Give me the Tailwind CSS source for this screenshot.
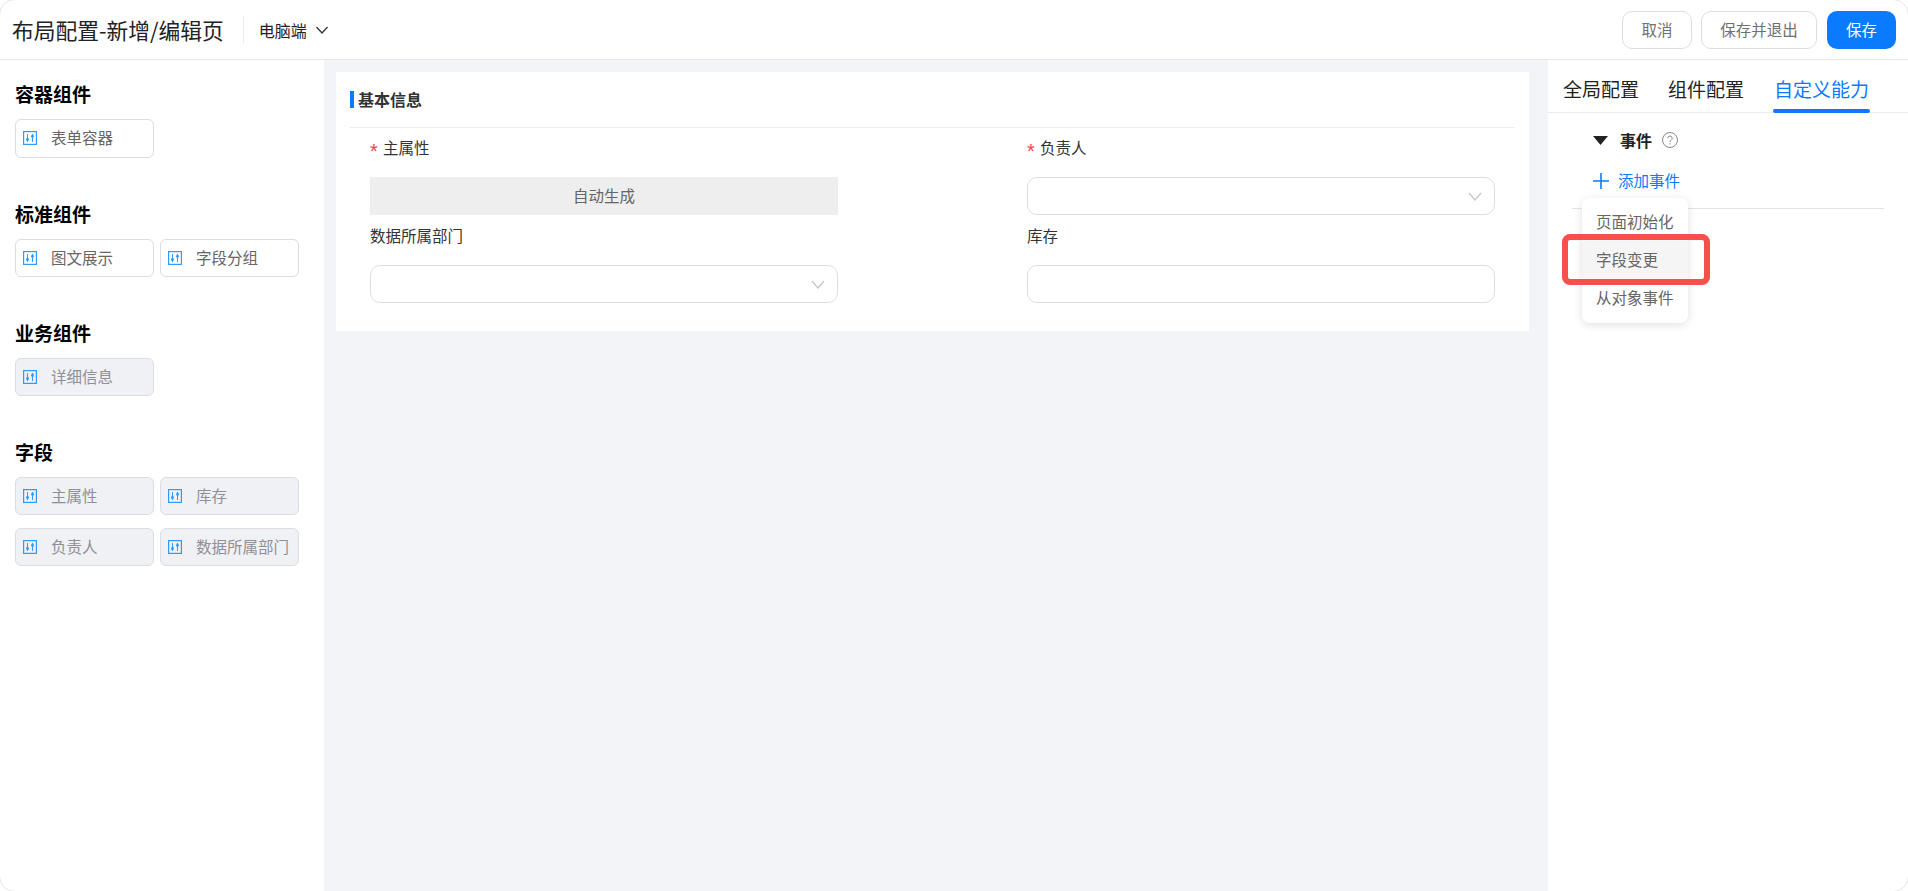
<!DOCTYPE html>
<html lang="zh-CN">
<head>
  <meta charset="UTF-8" />
  <title>布局配置-新增/编辑页</title>
  <script src="https://cdn.jsdelivr.net/npm/@tailwindcss/browser@4"></script>
</head>
<body class="bg-white h-[891px] overflow-hidden font-['Noto_Sans_CJK_SC','Noto_Sans',sans-serif]">
  <div class="h-[893px] w-[1910px] -m-px border border-[#e6e6e8] rounded-[16px] overflow-hidden flex flex-col bg-white">
    <!-- Header -->
    <header class="h-[60px] shrink-0 border-b border-[#e8e8ea] flex items-center pl-3 pr-3">
      <h1 class="text-[21.75px] leading-7 text-[#222]">布局配置-新增/编辑页</h1>
      <div class="w-px h-7 bg-[#ececee] ml-[19px] mr-[15px]"></div>
      <button class="flex items-center gap-2 text-base text-[#222]">
        电脑端
        <svg class="w-3.5 h-3.5" viewBox="0 0 14 14" fill="none" stroke="#333" stroke-width="1.3"><path d="M1.5 4l5.5 6 5.5-6" /></svg>
      </button>
      <div class="ml-auto flex items-center">
        <button class="w-[70px] h-[38px] rounded-[10px] border border-[#dcdde1] text-[15.5px] text-[#707070]">取消</button>
        <button class="w-[116px] h-[38px] ml-[9px] rounded-[10px] border border-[#dcdde1] text-[15.5px] text-[#707070]">保存并退出</button>
        <button class="w-[69px] h-[38px] ml-[10px] rounded-[10px] bg-[#0a7aff] text-[15.5px] text-white">保存</button>
      </div>
    </header>

    <div class="flex-1 flex min-h-0">
      <!-- Component palette -->
      <aside class="w-[324px] shrink-0 pl-[15px] pt-[23px]">
        <h2 class="text-[19px] leading-[22px] font-bold text-black">容器组件</h2>
        <div class="grid grid-cols-[139px_139px] gap-x-1.5 gap-y-[13px] mt-[14px]">
          <div class="h-[39px] rounded-md border border-[#dcdde3] flex items-center pl-[7px] pb-px text-[15.5px] text-[#666]">
            <svg class="w-3.5 h-3.5 mr-3.5 shrink-0" viewBox="0 0 14 14" fill="none" stroke="#2f9bff"><rect x=".6" y=".6" width="12.8" height="12.8" stroke-width="1.2" /><path d="M4.5 3v8M9.5 3v8" /><ellipse cx="4.5" cy="8.5" rx="1.4" ry="1.8" fill="#2f9bff" stroke="none" /><ellipse cx="9.5" cy="5.2" rx="1.4" ry="1.8" fill="#2f9bff" stroke="none" /></svg>
            表单容器
          </div>
        </div>
        <h2 class="text-[19px] leading-[22px] font-bold text-black mt-[45px]">标准组件</h2>
        <div class="grid grid-cols-[139px_139px] gap-x-1.5 gap-y-[13px] mt-[14px]">
          <div class="h-[38px] rounded-md border border-[#dcdde3] flex items-center pl-[7px] text-[15.5px] text-[#666]">
            <svg class="w-3.5 h-3.5 mr-3.5 shrink-0" viewBox="0 0 14 14" fill="none" stroke="#2f9bff"><rect x=".6" y=".6" width="12.8" height="12.8" stroke-width="1.2" /><path d="M4.5 3v8M9.5 3v8" /><ellipse cx="4.5" cy="8.5" rx="1.4" ry="1.8" fill="#2f9bff" stroke="none" /><ellipse cx="9.5" cy="5.2" rx="1.4" ry="1.8" fill="#2f9bff" stroke="none" /></svg>
            图文展示
          </div>
          <div class="h-[38px] rounded-md border border-[#dcdde3] flex items-center pl-[7px] text-[15.5px] text-[#666]">
            <svg class="w-3.5 h-3.5 mr-3.5 shrink-0" viewBox="0 0 14 14" fill="none" stroke="#2f9bff"><rect x=".6" y=".6" width="12.8" height="12.8" stroke-width="1.2" /><path d="M4.5 3v8M9.5 3v8" /><ellipse cx="4.5" cy="8.5" rx="1.4" ry="1.8" fill="#2f9bff" stroke="none" /><ellipse cx="9.5" cy="5.2" rx="1.4" ry="1.8" fill="#2f9bff" stroke="none" /></svg>
            字段分组
          </div>
        </div>
        <h2 class="text-[19px] leading-[22px] font-bold text-black mt-[45px]">业务组件</h2>
        <div class="grid grid-cols-[139px_139px] gap-x-1.5 gap-y-[13px] mt-[14px]">
          <div class="h-[38px] rounded-md border border-[#dcdde3] bg-[#f0f1f5] flex items-center pl-[7px] text-[15.5px] text-[#8f8f95]">
            <svg class="w-3.5 h-3.5 mr-3.5 shrink-0" viewBox="0 0 14 14" fill="none" stroke="#2f9bff"><rect x=".6" y=".6" width="12.8" height="12.8" stroke-width="1.2" /><path d="M4.5 3v8M9.5 3v8" /><ellipse cx="4.5" cy="8.5" rx="1.4" ry="1.8" fill="#2f9bff" stroke="none" /><ellipse cx="9.5" cy="5.2" rx="1.4" ry="1.8" fill="#2f9bff" stroke="none" /></svg>
            详细信息
          </div>
        </div>
        <h2 class="text-[19px] leading-[22px] font-bold text-black mt-[45px]">字段</h2>
        <div class="grid grid-cols-[139px_139px] gap-x-1.5 gap-y-[13px] mt-[14px]">
          <div class="h-[38px] rounded-md border border-[#dcdde3] bg-[#f0f1f5] flex items-center pl-[7px] text-[15.5px] text-[#8f8f95]">
            <svg class="w-3.5 h-3.5 mr-3.5 shrink-0" viewBox="0 0 14 14" fill="none" stroke="#2f9bff"><rect x=".6" y=".6" width="12.8" height="12.8" stroke-width="1.2" /><path d="M4.5 3v8M9.5 3v8" /><ellipse cx="4.5" cy="8.5" rx="1.4" ry="1.8" fill="#2f9bff" stroke="none" /><ellipse cx="9.5" cy="5.2" rx="1.4" ry="1.8" fill="#2f9bff" stroke="none" /></svg>
            主属性
          </div>
          <div class="h-[38px] rounded-md border border-[#dcdde3] bg-[#f0f1f5] flex items-center pl-[7px] text-[15.5px] text-[#8f8f95]">
            <svg class="w-3.5 h-3.5 mr-3.5 shrink-0" viewBox="0 0 14 14" fill="none" stroke="#2f9bff"><rect x=".6" y=".6" width="12.8" height="12.8" stroke-width="1.2" /><path d="M4.5 3v8M9.5 3v8" /><ellipse cx="4.5" cy="8.5" rx="1.4" ry="1.8" fill="#2f9bff" stroke="none" /><ellipse cx="9.5" cy="5.2" rx="1.4" ry="1.8" fill="#2f9bff" stroke="none" /></svg>
            库存
          </div>
          <div class="h-[38px] rounded-md border border-[#dcdde3] bg-[#f0f1f5] flex items-center pl-[7px] text-[15.5px] text-[#8f8f95]">
            <svg class="w-3.5 h-3.5 mr-3.5 shrink-0" viewBox="0 0 14 14" fill="none" stroke="#2f9bff"><rect x=".6" y=".6" width="12.8" height="12.8" stroke-width="1.2" /><path d="M4.5 3v8M9.5 3v8" /><ellipse cx="4.5" cy="8.5" rx="1.4" ry="1.8" fill="#2f9bff" stroke="none" /><ellipse cx="9.5" cy="5.2" rx="1.4" ry="1.8" fill="#2f9bff" stroke="none" /></svg>
            负责人
          </div>
          <div class="h-[38px] rounded-md border border-[#dcdde3] bg-[#f0f1f5] flex items-center pl-[7px] text-[15.5px] text-[#8f8f95]">
            <svg class="w-3.5 h-3.5 mr-3.5 shrink-0" viewBox="0 0 14 14" fill="none" stroke="#2f9bff"><rect x=".6" y=".6" width="12.8" height="12.8" stroke-width="1.2" /><path d="M4.5 3v8M9.5 3v8" /><ellipse cx="4.5" cy="8.5" rx="1.4" ry="1.8" fill="#2f9bff" stroke="none" /><ellipse cx="9.5" cy="5.2" rx="1.4" ry="1.8" fill="#2f9bff" stroke="none" /></svg>
            数据所属部门
          </div>
        </div>
      </aside>

      <!-- Canvas -->
      <main class="w-[1224px] shrink-0 bg-[#f3f4f8] pl-3 pt-3">
        <section class="w-[1193px] h-[259px] bg-white px-3.5 pt-[19px]">
          <div class="flex items-center h-[17px]">
            <span class="w-1 h-[17px] bg-[#0a7aff]"></span>
            <h3 class="ml-1 mb-0.5 text-base font-bold text-[#333]">基本信息</h3>
          </div>
          <div class="h-px bg-[#eeeef0] mt-[19px]"></div>
          <div class="grid grid-cols-[468px_468px] gap-x-[189px] ml-5 mt-2">
            <div>
              <label class="flex items-center h-6 text-[15.5px] text-[#333]"><span class="w-[13px] h-6 text-[#f5424d] text-[20px] leading-[30px] font-['Liberation_Sans',sans-serif]">*</span>主属性</label>
              <div class="h-[38px] mt-[17px] bg-[#eeeeee] flex items-center justify-center text-[15.5px] text-[#666]">自动生成</div>
            </div>
            <div>
              <label class="flex items-center h-6 text-[15.5px] text-[#333]"><span class="w-[13px] h-6 text-[#f5424d] text-[20px] leading-[30px] font-['Liberation_Sans',sans-serif]">*</span>负责人</label>
              <div class="h-[38px] mt-[17px] rounded-[10px] border border-[#dcdde1] flex items-center justify-end pr-3">
                <svg class="w-3.5 h-3.5" viewBox="0 0 14 14" fill="none" stroke="#c4c4c8" stroke-width="1.2"><path d="M1 4l6 7 6-7" /></svg>
              </div>
            </div>
            <div class="mt-[9px]">
              <label class="block h-6 leading-[22px] text-[15.5px] text-[#333]">数据所属部门</label>
              <div class="h-[38px] mt-[17px] rounded-[10px] border border-[#dcdde1] flex items-center justify-end pr-3">
                <svg class="w-3.5 h-3.5" viewBox="0 0 14 14" fill="none" stroke="#c4c4c8" stroke-width="1.2"><path d="M1 4l6 7 6-7" /></svg>
              </div>
            </div>
            <div class="mt-[9px]">
              <label class="block h-6 leading-[22px] text-[15.5px] text-[#333]">库存</label>
              <div class="h-[38px] mt-[17px] rounded-[10px] border border-[#dcdde1]"></div>
            </div>
          </div>
        </section>
      </main>

      <!-- Settings -->
      <aside class="flex-1 relative">
        <nav class="h-[53px] border-b border-[#ececee] flex gap-[29px] pl-[15px] text-[19px] text-[#222]">
          <span class="leading-[58px]">全局配置</span>
          <span class="leading-[58px] mr-px">组件配置</span>
          <span class="leading-[58px] text-[#0a7aff] relative">自定义能力<span class="absolute -left-px -right-px -bottom-px h-1 rounded-full bg-[#0a7aff]"></span></span>
        </nav>
        <div class="pl-[45px] pt-[17px]">
          <div class="flex items-center h-5">
            <svg class="w-[15px] h-[9px]" viewBox="0 0 15 9" fill="#222"><path d="M0 0h15l-7.5 9z" /></svg>
            <span class="ml-3 text-base font-bold text-[#222]">事件</span>
            <svg class="ml-2.5 w-4 h-4" viewBox="0 0 16 16" fill="none" stroke="#888"><circle cx="8" cy="8" r="7.5" /><path d="M5.8 6.2a2.2 2.2 0 1 1 3.4 1.9c-.8.5-1.2.9-1.2 1.9" /><path d="M8 11.2v1.3" /></svg>
          </div>
          <div class="flex items-center h-5 mt-[21px] text-[15.5px] text-[#0a7aff]">
            <svg class="w-4 h-4" viewBox="0 0 16 16" fill="none" stroke="#0a7aff" stroke-width="1.6"><path d="M8 0v16M0 8h16" /></svg>
            <span class="ml-[9px]">添加事件</span>
          </div>
        </div>
        <div class="h-px bg-[#e4e4e8] ml-6 w-[312px] mt-[17px]"></div>

        <!-- Event type menu -->
        <ul class="absolute left-[34px] top-[138px] w-[106px] h-[125px] py-[5px] bg-white rounded-lg shadow-[0_2px_10px_rgba(0,0,0,0.12)] text-[15.5px] text-[#666]">
          <li class="h-[38px] leading-[36px] pl-3.5">页面初始化</li>
          <li class="h-[38px] leading-[36px] pl-3.5 bg-[#f5f5f5]">字段变更</li>
          <li class="h-[38px] leading-[36px] pl-3.5">从对象事件</li>
        </ul>
        <div class="absolute left-[14px] top-[174px] w-[148px] h-[51px] border-[6px] border-[#f5504c] rounded-lg"></div>
      </aside>
    </div>
  </div>
</body>
</html>
